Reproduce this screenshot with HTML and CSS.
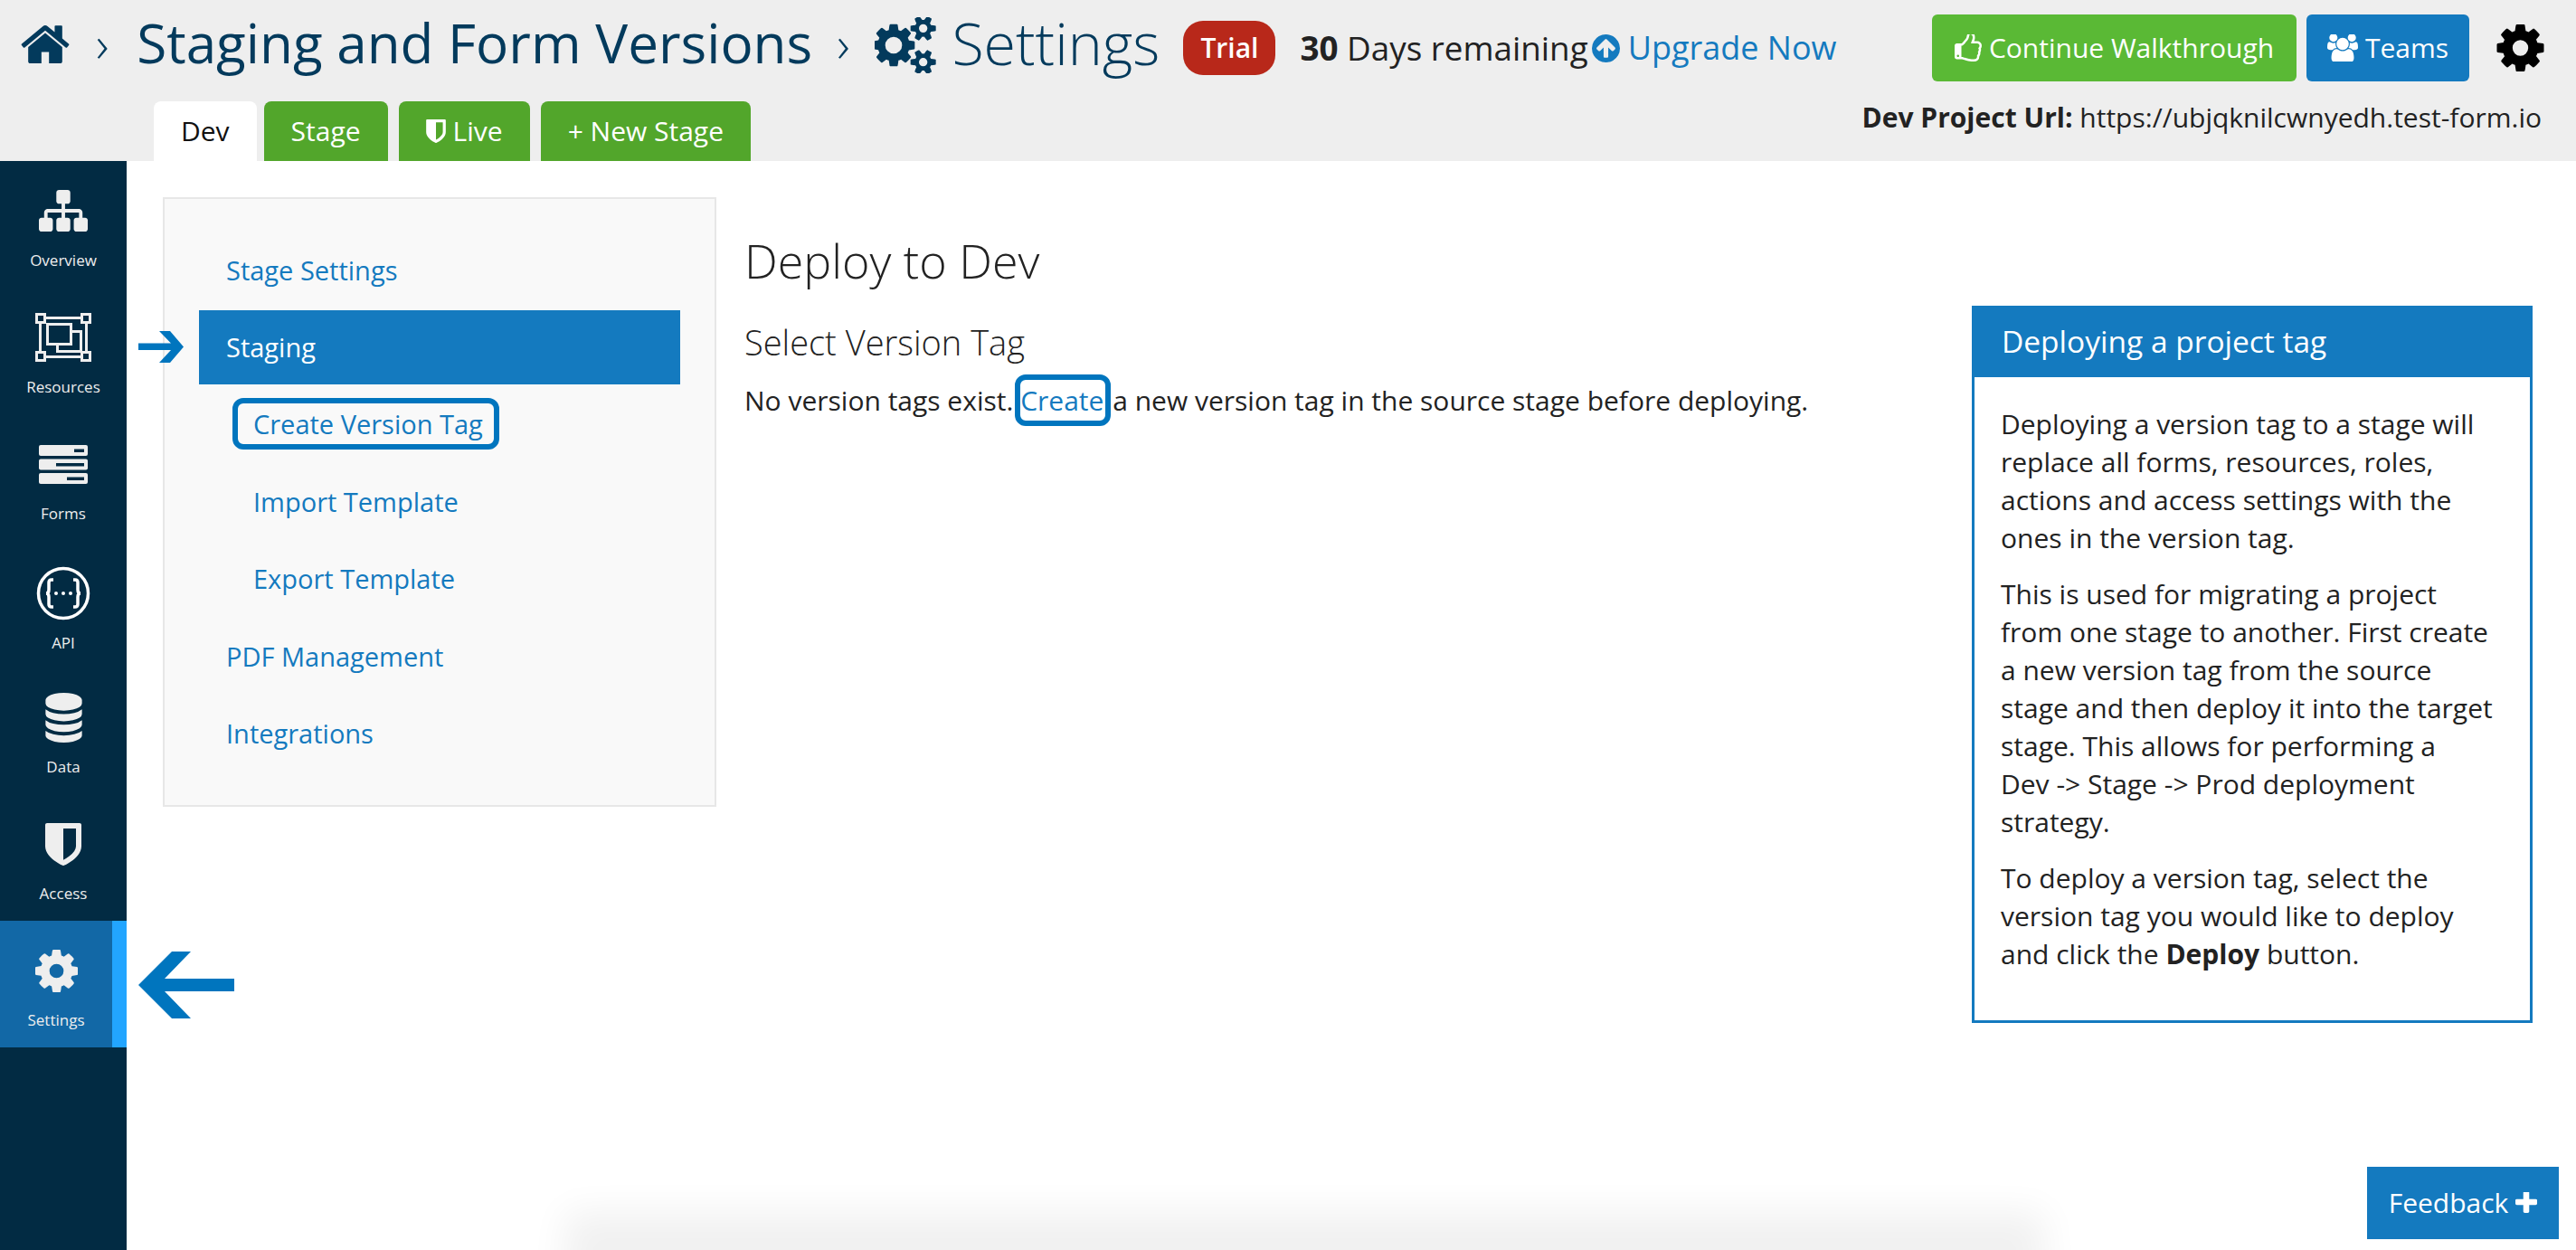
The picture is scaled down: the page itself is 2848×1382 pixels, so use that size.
FILE: index.html
```html
<!DOCTYPE html>
<html lang="en">
<head>
    <meta charset="UTF-8">
    <title>Staging and Form Versions</title>
    <link rel="stylesheet" href="styles.css">
</head>
<body>
<div class="page">
    <header class="topbar">
        <div class="topbar-row">
            <svg class="home-icon" viewBox="64 128 1664 1408"><path d="M1472 992v480q0 26-19 45t-45 19h-384v-384h-256v384h-384q-26 0-45-19t-19-45v-480q0-1 .5-3t.5-3l575-474 575 474q1 2 1 6zm223-69l-62 74q-8 9-21 11h-3q-13 0-21-7l-692-577-692 577q-12 8-24 7-13-2-21-11l-62-74q-8-10-7-23.5t11-21.5l719-599q32-26 76-26t76 26l244 204v-195q0-14 9-23t23-9h192q14 0 23 9t9 23v408l219 182q10 8 11 21.5t-7 23.5z"/></svg>
            <span class="crumb-sep first">›</span>
            <h1 class="crumb-title">Staging and Form Versions</h1>
            <span class="crumb-sep">›</span>
            <svg class="cogs-icon" viewBox="0 128 1920 1536"><path d="M832 896q0-106-75-181t-181-75-181 75-75 181 75 181 181 75 181-75 75-181zm768 512q0-52-38-90t-90-38-90 38-38 90q0 53 37.5 90.5t90.5 37.5 90.5-37.5 37.5-90.5zm0-1024q0-52-38-90t-90-38-90 38-38 90q0 53 37.5 90.5t90.5 37.5 90.5-37.5 37.5-90.5zm-384 421v185q0 10-7 19.5t-16 10.5l-155 24q-11 35-32 76 34 48 90 115 7 11 7 20 0 12-7 19-23 30-82.5 89.5t-78.5 59.5q-11 0-21-7l-115-90q-37 19-77 31-11 108-23 155-7 24-30 24h-186q-11 0-20-7.5t-10-17.5l-23-153q-34-10-75-31l-118 89q-7 7-20 7-11 0-21-8-144-133-144-160 0-9 7-19 10-14 41-53t47-61q-23-44-35-82l-152-24q-10-1-17-9.5t-7-19.5v-185q0-10 7-19.5t16-10.5l155-24q11-35 32-76-34-48-90-115-7-11-7-20 0-12 7-20 22-30 82-89t79-59q11 0 21 7l115 90q34-18 77-32 11-108 23-154 7-24 30-24h186q11 0 20 7.5t10 17.5l23 153q34 10 75 31l118-89q8-7 20-7 11 0 21 8 144 133 144 160 0 8-7 19-12 16-42 54t-45 60q23 48 34 82l152 23q10 2 17 10.5t7 19.5zm640 533v140q0 16-149 31-12 27-30 52 51 113 51 138 0 4-4 7-122 71-124 71-8 0-46-47t-52-68q-20 2-30 2t-30-2q-14 21-52 68t-46 47q-2 0-124-71-4-3-4-7 0-25 51-138-18-25-30-52-149-15-149-31v-140q0-16 149-31 13-29 30-52-51-113-51-138 0-4 4-7 4-2 35-20t59-34 30-16q8 0 46 46.5t52 67.5q20-2 30-2t30 2q51-71 92-112l6-2q4 0 124 70 4 3 4 7 0 25-51 138 17 23 30 52 149 15 149 31zm0-1024v140q0 16-149 31-12 27-30 52 51 113 51 138 0 4-4 7-122 71-124 71-8 0-46-47t-52-68q-20 2-30 2t-30-2q-14 21-52 68t-46 47q-2 0-124-71-4-3-4-7 0-25 51-138-18-25-30-52-149-15-149-31v-140q0-16 149-31 13-29 30-52-51-113-51-138 0-4 4-7 4-2 35-20t59-34 30-16q8 0 46 46.5t52 67.5q20-2 30-2t30 2q51-71 92-112l6-2q4 0 124 70 4 3 4 7 0 25-51 138 17 23 30 52 149 15 149 31z"/></svg>
            <span class="crumb-settings">Settings</span>
            <span class="trial-badge">Trial</span>
            <span class="days-left"><b>30</b> Days remaining</span>
            <a class="upgrade-link">
                <svg class="upgrade-icon" viewBox="128 128 1536 1536"><path d="M1412 895q0-27-18-45l-362-362-91-91q-18-18-45-18t-45 18l-91 91-362 362q-18 18-18 45t18 45l91 91q18 18 45 18t45-18l189-189v502q0 26 19 45t45 19h128q26 0 45-19t19-45v-502l189 189q19 19 45 19t45-19l91-91q18-18 18-45zm252 1q0 209-103 385.5t-279.5 279.5-385.5 103-385.5-103-279.5-279.5-103-385.5 103-385.5 279.5-279.5 385.5-103 385.5 103 279.5 279.5 103 385.5z"/></svg>
                Upgrade Now
            </a>
            <div class="topbar-actions">
                <a class="btn btn-green">
                    <svg class="btn-icon" viewBox="128 128 1536 1536"><path d="M384 1344q0-26-19-45t-45-19-45 19-19 45 19 45 45 19 45-19 19-45zm1152-576q0-51-39-89.5t-89-38.5h-352q0-58 48-159.5t48-160.5q0-98-32-145t-128-47q-26 26-38 85t-30.5 125.5-59.5 109.5q-22 23-77 91-4 5-23 30t-31.5 41-34.5 42.5-40 44-38.5 35.5-40 27-35.5 9h-32v640h32q13 0 31.5 3t33 6.5 38 11 35 11.5 35.5 12.5 29 10.5q211 73 342 73h121q192 0 192-167 0-26-5-56 30-16 47.5-52.5t17.5-73.5-18-69q53-50 53-119 0-25-10-55.5t-25-47.5q32-1 53.5-47t21.5-81zm128-1q0 89-49 163 9 33 9 69 0 77-38 144 3 21 3 43 0 101-60 178 1 139-85 219.5t-227 80.5h-129q-96 0-189.5-22.5t-216.5-65.5q-116-40-138-40h-288q-53 0-90.5-37.5t-37.5-90.5v-640q0-53 37.5-90.5t90.5-37.5h274q36-24 137-155 58-75 107-128 24-25 35.5-85.5t30.5-126.5 62-108q39-37 90-37 84 0 151 32.5t102 101.5 35 186q0 93-48 192h176q104 0 180 76t76 179z"/></svg>
                    Continue Walkthrough
                </a>
                <a class="btn btn-blue">
                    <svg class="btn-icon teams" viewBox="0 128 1920 1536"><path d="M593 896q-162 5-265 128h-134q-82 0-138-40.5t-56-118.5q0-353 124-353 6 0 43.5 21t97.5 42.5 119 21.5q67 0 133-23-5 37-5 66 0 139 81 256zm1071 637q0 120-73 189.5t-194 69.5h-874q-121 0-194-69.5t-73-189.5q0-53 3.5-103.5t14-109 26.5-108.5 43-97.5 62-81 85.5-53.5 111.5-20q10 0 43 21.5t73 48 107 48 135 21.5 135-21.5 107-48 73-48 43-21.5q61 0 111.5 20t85.5 53.5 62 81 43 97.5 26.5 108.5 14 109 3.5 103.5zm-1024-1277q0 106-75 181t-181 75-181-75-75-181 75-181 181-75 181 75 75 181zm704 384q0 159-112.5 271.5t-271.5 112.5-271.5-112.5-112.5-271.5 112.5-271.5 271.5-112.5 271.5 112.5 112.5 271.5zm576 225q0 78-56 118.5t-138 40.5h-134q-103-123-265-128 81-117 81-256 0-29-5-66 66 23 133 23 59 0 119-21.5t97.5-42.5 43.5-21q124 0 124 353zm-128-609q0 106-75 181t-181 75-181-75-75-181 75-181 181-75 181 75 75 181z"/></svg>
                    Teams
                </a>
                <svg class="top-gear" viewBox="128 128 1536 1536"><path d="M1152 896q0-106-75-181t-181-75-181 75-75 181 75 181 181 75 181-75 75-181zm512-109v222q0 12-8 23t-20 13l-185 28q-19 54-39 91 35 50 107 138 10 12 10 25t-9 23q-27 37-99 108t-94 71q-12 0-26-9l-138-108q-44 23-91 38-16 136-29 186-7 28-36 28h-222q-14 0-24.5-8.5t-11.5-21.5l-28-184q-49-16-90-37l-141 107q-10 9-25 9-14 0-25-11-126-114-165-168-7-10-7-23 0-12 8-23 15-21 51-66.5t54-70.5q-27-50-41-99l-183-27q-13-2-21-12.5t-8-23.5v-222q0-12 8-23t19-13l186-28q14-46 39-92-40-57-107-138-10-12-10-24 0-10 9-23 26-36 98.5-107.5t94.5-71.5q13 0 26 10l138 107q44-23 91-38 16-136 29-186 7-28 36-28h222q14 0 24.5 8.5t11.5 21.5l28 184q49 16 90 37l142-107q9-9 24-9 13 0 25 10 129 119 165 170 7 8 7 22 0 12-8 23-15 21-51 66.5t-54 70.5q26 50 41 98l183 28q13 2 21 12.5t8 23.5z"/></svg>
            </div>
        </div>
        <div class="tabs-row">
            <nav class="stage-tabs">
                <a class="stage-tab active">Dev</a>
                <a class="stage-tab">Stage</a>
                <a class="stage-tab">
                    <svg class="tab-shield" viewBox="256 128 1280 1536"><path d="M1344 960v-640h-448v1137q119-63 213-137 235-184 235-360zm192-768v768q0 86-33.5 170.5t-83 150-118 127.5-126.5 103-121 77.5-89.5 49.5-42.5 20q-12 6-26 6t-26-6q-16-7-42.5-20t-89.5-49.5-121-77.5-126.5-103-118-127.5-83-150-33.5-170.5v-768q0-26 19-45t45-19h1152q26 0 45 19t19 45z"/></svg>
                    Live
                </a>
                <a class="stage-tab">+ New Stage</a>
            </nav>
            <div class="project-url"><b>Dev Project Url:</b> https://ubjqknilcwnyedh.test-form.io</div>
        </div>
    </header>

    <div class="layout">
        <aside class="sidebar">
            <a class="side-item">
                <span class="side-icon">
                    <svg width="54" height="46" viewBox="0 128 1792 1536" preserveAspectRatio="none"><path d="M1792 1248v320q0 40-28 68t-68 28h-320q-40 0-68-28t-28-68v-320q0-40 28-68t68-28h96v-192h-512v192h96q40 0 68 28t28 68v320q0 40-28 68t-68 28h-320q-40 0-68-28t-28-68v-320q0-40 28-68t68-28h96v-192h-512v192h96q40 0 68 28t28 68v320q0 40-28 68t-68 28h-320q-40 0-68-28t-28-68v-320q0-40 28-68t68-28h96v-192q0-52 38-90t90-38h512v-192h-96q-40 0-68-28t-28-68v-320q0-40 28-68t68-28h320q40 0 68 28t28 68v320q0 40-28 68t-68 28h-96v192h512q52 0 90 38t38 90v192h96q40 0 68 28t28 68z"/></svg>
                </span>
                Overview
            </a>
            <a class="side-item">
                <span class="side-icon">
                    <svg class="line-icon" width="62" height="54" viewBox="0 0 62 54">
                        <rect x="5.5" y="5.5" width="51" height="43"/>
                        <rect class="handle" x="1.5" y="1.5" width="9" height="9"/>
                        <rect class="handle" x="51.5" y="1.5" width="9" height="9"/>
                        <rect class="handle" x="1.5" y="43.5" width="9" height="9"/>
                        <rect class="handle" x="51.5" y="43.5" width="9" height="9"/>
                        <rect x="13.5" y="12.5" width="26" height="22"/>
                        <path d="M39.5 20.5H50.5V42.5H24.5V34.5"/>
                    </svg>
                </span>
                Resources
            </a>
            <a class="side-item">
                <span class="side-icon">
                    <svg class="forms-icon" width="54" height="43" viewBox="0 0 54 43">
                        <rect width="54" height="12" rx="2"/>
                        <rect y="15.5" width="54" height="12" rx="2"/>
                        <rect y="31" width="54" height="12" rx="2"/>
                        <rect class="notch" x="39" y="4.5" width="11" height="3.5"/>
                        <rect class="notch" x="19" y="20" width="31" height="3.5"/>
                        <rect class="notch" x="31" y="35.5" width="19" height="3.5"/>
                    </svg>
                </span>
                Forms
            </a>
            <a class="side-item side-api">
                <span class="side-icon">
                    <svg class="api-icon" width="60" height="60" viewBox="0 0 60 60">
                        <circle cx="30" cy="30" r="27.5"/>
                        <path d="M19 15h-2q-3 0-3 3v8q0 4-3 4 3 0 3 4v8q0 3 3 3h2"/>
                        <path d="M41 15h2q3 0 3 3v8q0 4 3 4-3 0-3 4v8q0 3-3 3h-2"/>
                        <circle class="dot" cx="22" cy="30" r="2"/>
                        <circle class="dot" cx="30" cy="30" r="2"/>
                        <circle class="dot" cx="38" cy="30" r="2"/>
                    </svg>
                </span>
                API
            </a>
            <a class="side-item">
                <span class="side-icon">
                    <svg width="47" height="55" viewBox="256 0 1280 1792" preserveAspectRatio="none"><path d="M896 768q237 0 443-43t325-127v170q0 69-103 128t-280 93.5-385 34.5-385-34.5-280-93.5-103-128v-170q119 84 325 127t443 43zm0 768q237 0 443-43t325-127v170q0 69-103 128t-280 93.5-385 34.5-385-34.5-280-93.5-103-128v-170q119 84 325 127t443 43zm0-384q237 0 443-43t325-127v170q0 69-103 128t-280 93.5-385 34.5-385-34.5-280-93.5-103-128v-170q119 84 325 127t443 43zm0-1152q208 0 385 34.5t280 93.5 103 128v128q0 69-103 128t-280 93.5-385 34.5-385-34.5-280-93.5-103-128v-128q0-69 103-128t280-93.5 385-34.5z" transform="translate(896 0) scale(.714 1) translate(-896 0)"/></svg>
                </span>
                Data
            </a>
            <a class="side-item">
                <span class="side-icon">
                    <svg width="40" height="47" viewBox="256 128 1280 1536" preserveAspectRatio="none"><path d="M1344 960v-640h-448v1137q119-63 213-137 235-184 235-360zm192-768v768q0 86-33.5 170.5t-83 150-118 127.5-126.5 103-121 77.5-89.5 49.5-42.5 20q-12 6-26 6t-26-6q-16-7-42.5-20t-89.5-49.5-121-77.5-126.5-103-118-127.5-83-150-33.5-170.5v-768q0-26 19-45t45-19h1152q26 0 45 19t19 45z"/></svg>
                </span>
                Access
            </a>
            <a class="side-item active">
                <span class="side-icon">
                    <svg width="47" height="47" viewBox="128 128 1536 1536"><path d="M1152 896q0-106-75-181t-181-75-181 75-75 181 75 181 181 75 181-75 75-181zm512-109v222q0 12-8 23t-20 13l-185 28q-19 54-39 91 35 50 107 138 10 12 10 25t-9 23q-27 37-99 108t-94 71q-12 0-26-9l-138-108q-44 23-91 38-16 136-29 186-7 28-36 28h-222q-14 0-24.5-8.5t-11.5-21.5l-28-184q-49-16-90-37l-141 107q-10 9-25 9-14 0-25-11-126-114-165-168-7-10-7-23 0-12 8-23 15-21 51-66.5t54-70.5q-27-50-41-99l-183-27q-13-2-21-12.5t-8-23.5v-222q0-12 8-23t19-13l186-28q14-46 39-92-40-57-107-138-10-12-10-24 0-10 9-23 26-36 98.5-107.5t94.5-71.5q13 0 26 10l138 107q44-23 91-38 16-136 29-186 7-28 36-28h222q14 0 24.5 8.5t11.5 21.5l28 184q49 16 90 37l142-107q9-9 24-9 13 0 25 10 129 119 165 170 7 8 7 22 0 12-8 23-15 21-51 66.5t-54 70.5q26 50 41 98l183 28q13 2 21 12.5t8 23.5z"/></svg>
                </span>
                Settings
            </a>
        </aside>

        <main class="content">
            <nav class="settings-menu">
                <a class="menu-row">Stage Settings</a>
                <a class="menu-row selected">Staging</a>
                <a class="menu-row sub"><span class="focus-box">Create Version Tag</span></a>
                <a class="menu-row sub"><span class="plain-sub">Import Template</span></a>
                <a class="menu-row sub"><span class="plain-sub">Export Template</span></a>
                <a class="menu-row">PDF Management</a>
                <a class="menu-row">Integrations</a>
            </nav>

            <section class="deploy">
                <h2>Deploy to Dev</h2>
                <h3>Select Version Tag</h3>
                <p>No version tags exist. <a class="create-link">Create</a> a new version tag in the source stage before deploying.</p>
            </section>

            <aside class="help-panel">
                <div class="help-title">Deploying a project tag</div>
                <div class="help-body">
                    <p>Deploying a version tag to a stage will replace all forms, resources, roles, actions and access settings with the ones in the version tag.</p>
                    <p>This is used for migrating a project from one stage to another. First create a new version tag from the source stage and then deploy it into the target stage. This allows for performing a Dev&nbsp;-&gt; Stage -&gt; Prod deployment strategy.</p>
                    <p>To deploy a version tag, select the version tag you would like to deploy and click the <b>Deploy</b> button.</p>
                </div>
            </aside>
        </main>
    </div>

    <!-- walkthrough arrows sit over the page -->
    <svg class="arrow arrow-staging" width="50" height="35" viewBox="0 0 50 35"><path d="M0 13.5H36L23 0H35L50 17.5L35 35H23L36 21H0Z"/></svg>
    <svg class="arrow arrow-settings" width="106" height="74" viewBox="0 0 106 74"><path d="M0 37L37 0H58L29 30H106V44H29L58 74H37Z"/></svg>

    <div class="bottom-shadow"></div>
    <a class="feedback">Feedback <svg class="feedback-plus" viewBox="192 192 1408 1408"><path d="M1600 736v192q0 40-28 68t-68 28h-416v416q0 40-28 68t-68 28h-192q-40 0-68-28t-28-68v-416h-416q-40 0-68-28t-28-68v-192q0-40 28-68t68-28h416v-416q0-40 28-68t68-28h192q40 0 68 28t28 68v416h416q40 0 68 28t28 68z"/></svg></a>
</div>
</body>
</html>
```

FILE: styles.css
```css
* {
    box-sizing: border-box;
}

body {
    margin: 0;
    font-family: "Open Sans", "Liberation Sans", sans-serif;
    font-size: 30px;
    line-height: 42px;
    color: #222;
    background: #fff;
}

.page {
    position: relative;
    height: 100vh;
    overflow: hidden;
}

/* top bar */
.topbar {
    height: 178px;
    background: #eee;
}

.topbar-row {
    display: flex;
    align-items: center;
    height: 112px;
    padding: 0 35px 6px 21px;
    color: #033a5c;
}

.home-icon {
    width: 58px;
    height: 46px;
    margin-top: -12px;
    fill: #033a5c;
}

.crumb-sep {
    margin: -12px 28px 0 27px;
    font-size: 56px;
    font-weight: 300;
}

.crumb-sep.first {
    margin-right: 31px;
}

.crumb-title {
    margin: -12px 0 0;
    font-size: 60.2px;
    font-weight: 400;
    line-height: 80px;
}

.cogs-icon {
    width: 70px;
    height: 62px;
    margin: -6px 0 0 0;
    fill: #033a5c;
}

.crumb-settings {
    margin: -12px 0 0 15px;
    font-size: 64.5px;
    font-weight: 300;
    line-height: 80px;
}

.trial-badge {
    width: 102px;
    height: 60px;
    margin-left: 26px;
    border-radius: 22px;
    background: #b8281a;
    color: #fff;
    font-size: 30px;
    font-weight: 600;
    line-height: 60px;
    text-align: center;
}

.days-left {
    margin-left: 27px;
    font-size: 36.8px;
    color: #222;
}

.upgrade-link {
    display: flex;
    align-items: center;
    margin-left: 4px;
    font-size: 36px;
    color: #147abf;
    white-space: nowrap;
}

.upgrade-icon {
    width: 31px;
    height: 31px;
    margin-right: 9px;
    fill: #147abf;
}

.topbar-actions {
    display: flex;
    align-items: center;
    margin-left: auto;
}

.btn {
    display: flex;
    align-items: center;
    justify-content: center;
    height: 74px;
    border-radius: 6px;
    color: #fff;
    font-size: 30px;
}

.btn-green {
    width: 403px;
    background: #5ab935;
}

.btn-blue {
    width: 180px;
    margin-left: 11px;
    background: #147abf;
}

.btn-icon {
    width: 30px;
    height: 30px;
    margin-right: 8px;
    fill: #fff;
}

.btn-icon.teams {
    width: 34px;
}

.top-gear {
    width: 53px;
    height: 52px;
    margin-left: 30px;
    fill: #000;
}

/* stage tabs */
.tabs-row {
    display: flex;
    justify-content: space-between;
    padding: 0 38px 0 170px;
}

.stage-tabs {
    display: flex;
}

.stage-tab {
    display: flex;
    align-items: center;
    height: 66px;
    margin-left: 12px;
    padding: 0 30px;
    border-radius: 8px 8px 0 0;
    background: #52a62b;
    color: #fff;
}

.stage-tab:nth-child(2) {
    margin-left: 8px;
}

.stage-tab.active {
    margin-left: 0;
    background: #fff;
    color: #111;
}

.tab-shield {
    width: 22px;
    height: 26px;
    margin-right: 8px;
    fill: #fff;
}

.project-url {
    line-height: 36px;
}

/* main layout */
.layout {
    display: flex;
    height: 1204px;
}

.sidebar {
    flex: none;
    width: 140px;
    background: #022b43;
}

.side-item {
    display: flex;
    flex-direction: column;
    align-items: center;
    height: 140px;
    padding-top: 10px;
    color: #eee;
    font-size: 17px;
    font-weight: 500;
    line-height: 20px;
}

.side-item svg {
    fill: #eee;
}

.side-icon {
    display: flex;
    align-items: center;
    justify-content: center;
    height: 90px;
}

.side-item.side-api {
    padding-top: 13px;
}

.side-item.active {
    border-right: 16px solid #22a5ff;
    background: #1268a6;
}

.line-icon rect,
.line-icon path {
    fill: none;
    stroke: #eee;
    stroke-width: 3;
}

.line-icon .handle {
    fill: #022b43;
}

.forms-icon .notch {
    fill: #022b43;
}

.side-item .api-icon path,
.side-item .api-icon > circle {
    fill: none;
    stroke: #fff;
    stroke-width: 3.5;
}

.side-item .api-icon .dot {
    fill: #fff;
    stroke: none;
}

.content {
    display: flex;
    flex: 1;
    align-items: flex-start;
    padding: 40px 48px 0 40px;
}

/* settings menu */
.settings-menu {
    display: flex;
    flex: none;
    flex-direction: column;
    gap: 3.33px;
    width: 612px;
    height: 674px;
    padding: 38px;
    border: 2px solid #e7e7e7;
    background: #f9f9f9;
}

.menu-row {
    display: flex;
    align-items: center;
    height: 82px;
    padding-left: 30px;
    color: #147abf;
    font-size: 29px;
}

.menu-row.selected {
    background: #147abf;
    color: #fff;
}

.menu-row.sub {
    padding-left: 43px;
}

.plain-sub {
    padding-left: 17px;
}

.focus-box {
    display: block;
    margin-top: -3px;
    padding: 0 12px 0 17px;
    outline: 6px solid #0075be;
    border-radius: 6px;
    line-height: 45px;
}

/* deploy section */
.deploy {
    flex: 1;
    padding: 34px 0 0 31px;
}

.deploy h2 {
    margin: 0;
    font-size: 52px;
    font-weight: 300;
    line-height: 72px;
}

.deploy h3 {
    margin: 29px 0 0;
    font-size: 38px;
    font-weight: 300;
    line-height: 50px;
}

.deploy p {
    margin: 17px 0 0;
}

.create-link {
    display: inline-block;
    padding: 0 2px 0 0;
    outline: 6px solid #0075be;
    border-radius: 6px;
    color: #147abf;
    line-height: 45px;
}

/* help panel */
.help-panel {
    flex: none;
    width: 620px;
    margin-top: 120px;
    border: 3px solid #147abf;
}

.help-title {
    height: 77px;
    margin: -1px -1px 0;
    padding-left: 31px;
    background: #147abf;
    color: #fff;
    font-size: 33.5px;
    line-height: 74px;
}

.help-body {
    height: 711px;
    padding: 31px 30px 0 29px;
}

.help-body p {
    margin: 0 0 20px;
}

/* overlays */
.arrow {
    position: absolute;
    fill: #0075be;
}

.arrow-staging {
    top: 366px;
    left: 153px;
}

.arrow-settings {
    top: 1052px;
    left: 153px;
}

.bottom-shadow {
    position: absolute;
    top: 1382px;
    left: 625px;
    width: 1635px;
    height: 100px;
    box-shadow: 0 -42px 40px rgba(0, 0, 0, 0.06);
}

.feedback {
    position: absolute;
    right: 19px;
    bottom: 12px;
    display: flex;
    align-items: center;
    justify-content: center;
    width: 212px;
    height: 80px;
    background: #147abf;
    color: #fff;
}

.feedback-plus {
    width: 24px;
    height: 24px;
    margin-left: 8px;
    fill: #fff;
}
```
